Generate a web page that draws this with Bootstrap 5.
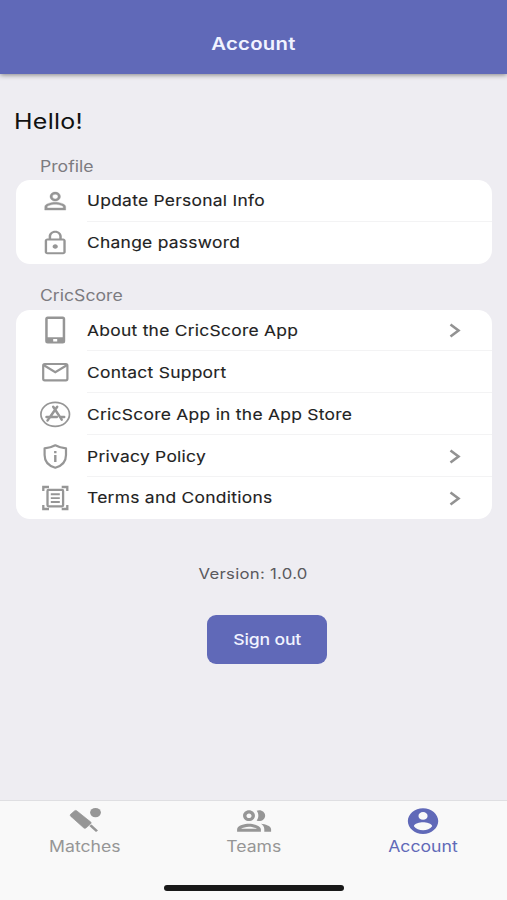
<!DOCTYPE html>
<html lang="en">
<head>
<meta charset="utf-8">
<meta name="viewport" content="width=device-width, initial-scale=1">
<title>Account</title>
<link href="https://cdn.jsdelivr.net/npm/bootstrap@5.3.0/dist/css/bootstrap.min.css" rel="stylesheet">
<style>
body{font-family:Inter,"Liberation Sans",sans-serif;background:#eeedf2;color:#222;height:900px;overflow:hidden}
.wide{display:inline-block;transform:scaleX(1.16);white-space:nowrap}
.wide-start{transform-origin:left center}
.top-bar{height:74px;background:#6069b8;box-shadow:0 1px 5px rgba(0,0,0,.45);color:#f1f3ff;font-size:17.5px;font-weight:600;line-height:24px;padding-top:32px;letter-spacing:.25px}
.hello{font-size:21.5px;line-height:30px;padding:32px 0 0 14px;color:#111;letter-spacing:.25px}
.section-label{font-size:15.2px;line-height:20px;color:#7c7b80;padding-left:24px}
.first-label{padding-top:21px;padding-bottom:3px}
.second-label{padding-top:22px;padding-bottom:4px}
.group{margin:0 15px 0 16px}
.panel{border-radius:14px;background:#fff}
.entry{height:41.8px;padding-left:20px}
.entry-icon{width:38px;height:30px;color:#969696;flex:none}
.entry-body{margin-left:12.5px;font-size:15px;-webkit-text-stroke:.12px #222;letter-spacing:.24px;border-bottom:1px solid #f3f3f4;height:100%;padding-top:2px}
.entry:last-child .entry-body{border-bottom:0}
.chev{width:12px;height:15px;margin-right:31px;margin-top:-1px;color:#929292}
.version{font-size:14.4px;line-height:20px;color:#5a595e;padding-top:45px;letter-spacing:.25px}
.action{padding:31px 0 0 27px}
.sign-out{width:120px;height:49px;border-radius:9px;background:#6069b8;color:#f1f3ff;font-size:15.2px;font-weight:500;letter-spacing:-.15px}
.sign-out .wide{margin-top:2px}
.tabs{height:100px;background:#f9f9f9;border-top:1px solid #dfdfe2;color:#969696;font-size:15.2px;position:relative}
.tab svg{width:38px;height:28px;margin-top:6px}
.tab-label{line-height:20px;margin-top:1.5px}
.tab-active{color:#6069b8}
.home-bar{position:absolute;left:164px;top:84px;width:180px;height:6px;border-radius:3px;background:#191919}
</style>
<script src="https://cdn.jsdelivr.net/npm/bootstrap@5.3.0/dist/js/bootstrap.bundle.min.js"></script>
</head>
<body class="d-flex flex-column">
<header class="top-bar text-center flex-shrink-0"><span class="wide">Account</span></header>
<main class="flex-grow-1">
  <div class="hello"><span class="wide wide-start">Hello!</span></div>
  <section class="group">
    <div class="section-label first-label"><span class="wide wide-start">Profile</span></div>
    <div class="panel">
      <div class="entry d-flex align-items-center">
        <svg class="entry-icon" viewBox="0 0 38 30"><g transform="translate(3.500 1.500) scale(1.310 1.130)" fill="currentColor" stroke="currentColor" stroke-width=".3"><path d="M12 5.900a2.100 2.100 0 1 1 0 4.200 2.100 2.100 0 0 1 0-4.200m0 9c2.970 0 6.100 1.460 6.100 2.100v1.100H5.900V17c0-.64 3.130-2.100 6.100-2.100M12 4C9.790 4 8 5.790 8 8s1.790 4 4 4 4-1.790 4-4-1.790-4-4-4zm0 9c-2.670 0-8 1.340-8 4v3h16v-3c0-2.660-5.330-4-8-4z"/></g></svg>
        <div class="entry-body flex-grow-1 d-flex align-items-center"><span class="wide wide-start">Update Personal Info</span></div>
      </div>
      <div class="entry d-flex align-items-center">
        <svg class="entry-icon" viewBox="0 0 38 30"><g transform="translate(3.500 1.500) scale(1.310 1.130)" fill="currentColor"><path d="M12 17c1.100 0 2-.9 2-2s-.9-2-2-2-2 .9-2 2 .9 2 2 2zm6-9h-1V6c0-2.760-2.240-5-5-5S7 3.240 7 6v2H6c-1.100 0-2 .9-2 2v10c0 1.100.9 2 2 2h12c1.100 0 2-.9 2-2V10c0-1.100-.9-2-2-2zM8.900 6c0-1.710 1.390-3.100 3.100-3.100s3.100 1.390 3.100 3.100v2H8.900V6zM18.200 20.200H5.800V9.800h12.400v10.400z"/></g></svg>
        <div class="entry-body flex-grow-1 d-flex align-items-center"><span class="wide wide-start">Change password</span></div>
      </div>
    </div>
  </section>
  <section class="group">
    <div class="section-label second-label"><span class="wide wide-start">CricScore</span></div>
    <div class="panel">
      <div class="entry d-flex align-items-center">
        <svg class="entry-icon" viewBox="0 0 38 30"><path fill="currentColor" fill-rule="evenodd" d="M11.700 1.500h15q2.500 0 2.500 2.500v22q0 2.500-2.500 2.500h-15q-2.500 0-2.500-2.500V4q0-2.500 2.500-2.500zM11.700 4v18.300h15V4zM17.200 24v2.500h4V24z"/></svg>
        <div class="entry-body flex-grow-1 d-flex align-items-center justify-content-between"><span class="wide wide-start">About the CricScore App</span><svg class="chev" viewBox="0 0 12 15"><path d="M1.500 1.500L9.500 7.500 1.500 13.500" fill="none" stroke="currentColor" stroke-width="2.600"/></svg></div>
      </div>
      <div class="entry d-flex align-items-center">
        <svg class="entry-icon" viewBox="0 0 38 30"><g fill="none" stroke="currentColor" stroke-width="2.200"><rect x="7.200" y="7" width="24.200" height="16.300" rx="1.500"/><path d="M7.500 8L19.300 15.200 31.200 8"/></g></svg>
        <div class="entry-body flex-grow-1 d-flex align-items-center"><span class="wide wide-start">Contact Support</span></div>
      </div>
      <div class="entry d-flex align-items-center">
        <svg class="entry-icon" viewBox="0 0 38 30"><g fill="none" stroke="currentColor"><ellipse cx="19.200" cy="15.300" rx="14.300" ry="12" stroke-width="1.700"/><path d="M21.200 7.800L13.500 18.800M17.200 7.800L25.700 20.600M10.500 17.900h10.300M24 17.900h4.200M12.500 20.300l-1 1.200" stroke-width="2.500" stroke-linecap="round"/></g></svg>
        <div class="entry-body flex-grow-1 d-flex align-items-center pt-1"><span class="wide wide-start">CricScore App in the App Store</span></div>
      </div>
      <div class="entry d-flex align-items-center">
        <svg class="entry-icon" viewBox="0 0 38 30"><path d="M19.300 4.300C16 6.100 12.500 7 8.600 7.400v6.500C8.600 20.400 13 24.900 19.300 26.700 25.600 24.900 30 20.400 30 13.900V7.400C26.100 7 22.600 6.100 19.300 4.300z" fill="none" stroke="currentColor" stroke-width="2.200" stroke-linejoin="round"/><path d="M18.100 13.900h2.400v7h-2.400zM18.100 10h2.400v2.200h-2.400z" fill="currentColor"/></svg>
        <div class="entry-body flex-grow-1 d-flex align-items-center justify-content-between pt-1"><span class="wide wide-start">Privacy Policy</span><svg class="chev" viewBox="0 0 12 15"><path d="M1.500 1.500L9.500 7.500 1.500 13.500" fill="none" stroke="currentColor" stroke-width="2.600"/></svg></div>
      </div>
      <div class="entry d-flex align-items-center">
        <svg class="entry-icon" viewBox="0 0 38 30"><g fill="none" stroke="currentColor" stroke-width="2.300"><path d="M7.300 8V4H13M25.700 4h5.600v4M7.300 22V26H13M25.700 26h5.600v-4"/><rect x="11.500" y="6.900" width="15.600" height="16.400" rx="1"/><path d="M14.800 11.200h9M14.800 15.100h9M14.800 19h9" stroke-width="1.900"/></g></svg>
        <div class="entry-body flex-grow-1 d-flex align-items-center justify-content-between"><span class="wide wide-start">Terms and Conditions</span><svg class="chev" viewBox="0 0 12 15"><path d="M1.500 1.500L9.500 7.500 1.500 13.500" fill="none" stroke="currentColor" stroke-width="2.600"/></svg></div>
      </div>
    </div>
  </section>
  <div class="version text-center"><span class="wide">Version: 1.0.0</span></div>
  <div class="action d-flex justify-content-center"><button class="sign-out border-0 p-0" type="button"><span class="wide">Sign out</span></button></div>
</main>
<nav class="tabs row g-0 flex-shrink-0">
  <div class="tab col-4 d-flex flex-column align-items-center">
    <svg viewBox="0 0 38 28"><g fill="currentColor"><path d="M4.700 7.200L8.700 3.800q1-.8 2 0L24.800 15.100q.8.800 0 1.600L19.900 21q-1 .7-2 0L4.700 9.200q-1-1 0-2z" stroke="currentColor" stroke-width=".7"/><path d="M23.300 19.100l2.200-1.700 6.500 6-2 1.700z"/><ellipse cx="29.500" cy="5.600" rx="5.400" ry="4.700"/></g></svg>
    <div class="tab-label"><span class="wide">Matches</span></div>
  </div>
  <div class="tab col-4 d-flex flex-column align-items-center">
    <svg viewBox="0 0 38 28"><g transform="translate(-1.300 -4.400) scale(1.700 1.540)" fill="currentColor"><path d="M9 13.750c-2.340 0-7 1.170-7 3.500V19h14v-1.750c0-2.330-4.660-3.500-7-3.500zM4.340 17c.84-.58 2.870-1.250 4.660-1.250s3.820.67 4.660 1.250H4.340zM9 12c1.930 0 3.500-1.570 3.500-3.500S10.930 5 9 5 5.500 6.570 5.500 8.500 7.070 12 9 12zm0-5c.83 0 1.500.67 1.500 1.500S9.830 10 9 10s-1.500-.67-1.500-1.500S8.170 7 9 7zm7.040 6.810c1.160.84 1.960 1.960 1.960 3.440V19h4v-1.750c0-2.020-3.500-3.170-5.960-3.440zM15 12c1.930 0 3.500-1.570 3.500-3.500S16.930 5 15 5c-.54 0-1.040.13-1.500.35.63.89 1 1.980 1 3.150s-.37 2.260-1 3.150c.46.22.96.35 1.500.35z"/></g></svg>
    <div class="tab-label"><span class="wide">Teams</span></div>
  </div>
  <div class="tab tab-active col-4 d-flex flex-column align-items-center">
    <svg viewBox="0 0 38 28"><g transform="translate(.8 -1.400) scale(1.520 1.290)" fill="currentColor"><path d="M12 2C6.480 2 2 6.480 2 12s4.480 10 10 10 10-4.480 10-10S17.520 2 12 2zm0 3c1.660 0 3 1.340 3 3s-1.340 3-3 3-3-1.340-3-3 1.340-3 3-3zm0 14.200c-2.500 0-4.710-1.280-6-3.220.03-1.990 4-3.080 6-3.080 1.990 0 5.970 1.090 6 3.080-1.290 1.940-3.500 3.220-6 3.220z"/></g></svg>
    <div class="tab-label"><span class="wide">Account</span></div>
  </div>
  <div class="home-bar"></div>
</nav>
</body>
</html>
